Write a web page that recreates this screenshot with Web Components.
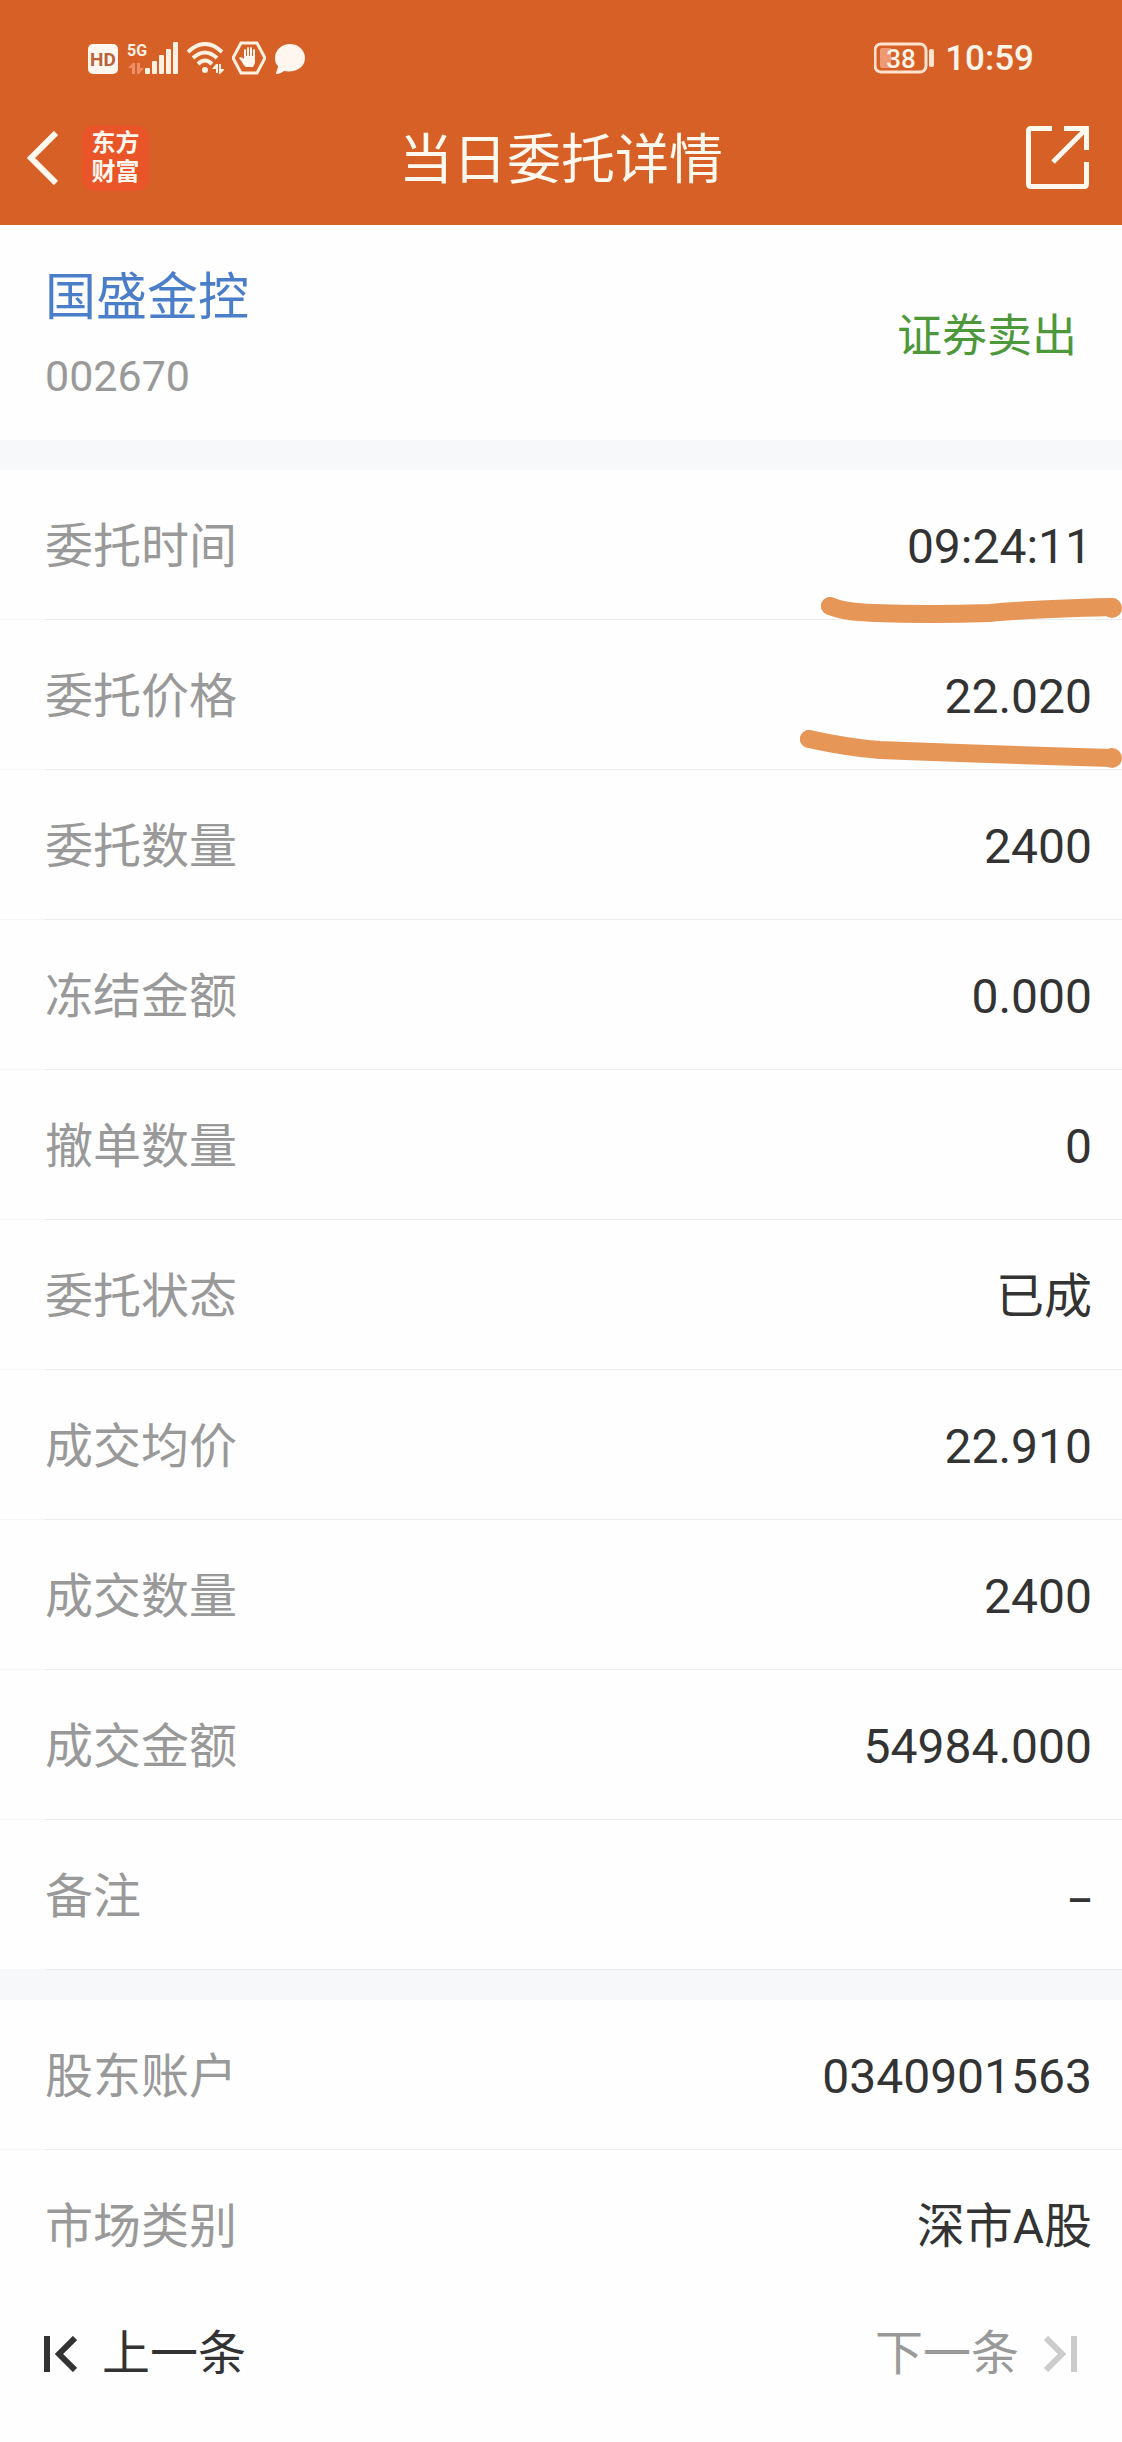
<!DOCTYPE html>
<html lang="zh-CN">
<head>
  <meta charset="UTF-8">
  <meta name="viewport" content="width=device-width, initial-scale=1">
  <title>当日委托详情</title>
  <style>
    body {
      margin: 0;
      background-color: #fefefe;
      color: #333333;
      font-family: Roboto, "Noto Sans CJK SC", sans-serif;
      font-size: 48px;
    }

    .empty {
      font-family: "Noto Sans", sans-serif;
      line-height: 48px;
    }
  </style>
</head>
<body>
  <order-page>
    <app-header slot="header">当日委托详情</app-header>
    <stock-summary name="国盛金控" code="002670">证券卖出</stock-summary>
    <detail-group>
      <detail-row label="委托时间">09:24:11<pen-mark slot="mark" kind="rise"></pen-mark></detail-row>
      <detail-row label="委托价格">22.020<pen-mark slot="mark" kind="fall"></pen-mark></detail-row>
      <detail-row label="委托数量">2400</detail-row>
      <detail-row label="冻结金额">0.000</detail-row>
      <detail-row label="撤单数量">0</detail-row>
      <detail-row label="委托状态">已成</detail-row>
      <detail-row label="成交均价">22.910</detail-row>
      <detail-row label="成交数量">2400</detail-row>
      <detail-row label="成交金额">54984.000</detail-row>
      <detail-row label="备注"><span class="empty">–</span></detail-row>
    </detail-group>
    <detail-group>
      <detail-row label="股东账户">0340901563</detail-row>
      <detail-row label="市场类别" last>深市A股</detail-row>
    </detail-group>
    <pager-bar slot="footer"></pager-bar>
  </order-page>

  <script>
    class OrderPage extends HTMLElement {
      constructor () {
        super()
        this.attachShadow({ mode: 'open' }).innerHTML = `
          <style>
            :host {
              display: flex;
              flex-direction: column;
            }
            main {
              display: flex;
              flex-direction: column;
              gap: 30px;
              background-color: #f6f8fa;
            }
          </style>
          <slot name="header"></slot>
          <main><slot></slot></main>
          <slot name="footer"></slot>
        `
      }
    }

    class StatusBar extends HTMLElement {
      constructor () {
        super()
        this.attachShadow({ mode: 'open' }).innerHTML = `
          <style>
            :host {
              display: flex;
              justify-content: space-between;
              align-items: center;
              padding: 24px 88px 0 88px;
              height: 68px;
              color: #fff4e8;
            }
            .icons, .info {
              display: flex;
              align-items: center;
            }
            .icons {
              gap: 8px;
            }
            .info {
              gap: 11px;
              font-size: 35px;
              font-weight: 500;
              line-height: 40px;
            }
            time {
              padding-top: 2px;
            }
            svg {
              display: block;
            }
          </style>
          <div class="icons">
            <svg width="31" height="32" viewBox="0 0 31 32">
              <rect y="2" width="30" height="30" rx="5" fill="#fff6f0"/>
              <text x="15" y="24" text-anchor="middle" font-size="19" font-weight="700" fill="#b9633a">HD</text>
            </svg>
            <svg width="52" height="40" viewBox="0 -4 52 40" fill="#fff1e2">
              <text x="0" y="14" font-size="16" font-weight="700">5G</text>
              <path d="M1 26l5-5h2v11H5v-6zM10 21h3v5h4l-5 6h-2z" fill="#ee8e68"/>
              <rect x="18" y="26" width="5" height="6" rx="1"/>
              <rect x="25" y="19" width="5" height="13" rx="1"/>
              <rect x="32" y="13" width="5" height="19" rx="1"/>
              <rect x="39" y="7" width="5" height="25" rx="1"/>
              <rect x="46" y="0" width="5" height="32" rx="1"/>
            </svg>
            <svg width="37" height="32" viewBox="0 0 37 32" fill="none" stroke="#fff1e2" stroke-width="4">
              <path d="M1 10q17-16 34 0M6 16q12-11 24 0M11 22q7-7 14 0"/>
              <circle cx="18" cy="28" r="3" fill="#fff1e2" stroke="none"/>
              <path d="M25 27l4-5h2v9h-2v-4zM32 22h2v5h4l-5 5h-1z" fill="#fff1e2" stroke="none"/>
            </svg>
            <svg width="34" height="34" viewBox="0 0 34 34" fill="#fff6f0">
              <path d="M9 2h16l8 15-8 15H9L1 17z" fill="none" stroke="#fff1e2" stroke-width="3"/>
              <path d="M12 18V9q1-2 2 0v6h1V7q1-2 2 0v8h1V7q1-2 2 0v8h1V9q1-2 2 0v13l-2 4h-7q-3-2-4-5l-3-4q2-2 5 1z"/>
            </svg>
            <svg width="32" height="32" viewBox="0 0 32 32" fill="#fff6f0">
              <path d="M16 2C8 2 1 8 1 16c0 4 1 6 3 8 0 3-2 5-2 8 4 0 6-2 8-3 12 2 21-4 21-13C31 8 24 2 16 2z"/>
            </svg>
          </div>
          <div class="info">
            <svg width="60" height="32" viewBox="0 0 60 32">
              <rect x="1" y="2" width="51" height="28" rx="6" fill="none" stroke="#ffe3cf" stroke-width="3"/>
              <path d="M8 6h9v20H8q-2 0-2-2V8q0-2 2-2z" fill="#ee9a74"/>
              <rect x="55" y="7" width="5" height="18" rx="2" fill="#ffe3cf"/>
              <text x="27" y="26" text-anchor="middle" font-size="26" font-weight="500" fill="#fff4e8">38</text>
            </svg>
            <time>10:59</time>
          </div>
        `
      }
    }

    class AppHeader extends HTMLElement {
      constructor () {
        super()
        this.attachShadow({ mode: 'open' }).innerHTML = `
          <style>
            :host {
              display: block;
              background-color: #d76027;
              color: #fff8ee;
            }
            nav {
              display: grid;
              grid-template-columns: 1fr auto 1fr;
              align-items: center;
              padding: 26px 27px 28px;
            }
            .left {
              display: flex;
              align-items: center;
              gap: 24px;
            }
            button {
              padding: 0;
              border: 0;
              background: none;
              color: inherit;
              cursor: pointer;
            }
            .share {
              justify-self: end;
              margin-right: 6px;
            }
            svg {
              display: block;
            }
            .logo {
              width: 67px;
              padding: 4px 0;
              border-radius: 13px;
              background-color: #e95428;
              font-size: 24px;
              font-weight: 700;
              line-height: 29px;
              text-align: center;
            }
            h1 {
              margin: 0;
              padding-top: 7px;
              font-size: 54px;
              font-weight: 400;
              line-height: 72px;
            }
          </style>
          <status-bar></status-bar>
          <nav>
            <div class="left">
              <button aria-label="返回">
                <svg width="31" height="54" viewBox="0 0 31 54" fill="none" stroke="currentColor" stroke-width="6">
                  <path d="M29 2L4 27l25 25"/>
                </svg>
              </button>
              <div class="logo">东方<br>财富</div>
            </div>
            <h1><slot></slot></h1>
            <button class="share" aria-label="分享">
              <svg width="63" height="63" viewBox="0 0 63 63" fill="none" stroke="currentColor" stroke-width="5">
                <path d="M26 2.500H5q-2.500 0-2.500 2.500v53q0 2.500 2.500 2.500h53q2.500 0 2.500-2.500V36M38 2.500h22.500V24M60 3L27 36"/>
              </svg>
            </button>
          </nav>
        `
      }
    }

    class StockSummary extends HTMLElement {
      constructor () {
        super()
        this.attachShadow({ mode: 'open' })
      }

      connectedCallback () {
        this.shadowRoot.innerHTML = `
          <style>
            :host {
              display: flex;
              justify-content: space-between;
              align-items: center;
              padding: 0 45px;
              background-color: #fefefe;
            }
            .stock {
              display: flex;
              flex-direction: column;
              gap: 8px;
              padding: 38px 0 29px;
              line-height: 70px;
            }
            .name {
              color: #4b7ec9;
              font-size: 51px;
              text-decoration: none;
            }
            .code {
              color: #999999;
              font-size: 43px;
            }
            .side {
              color: #4c983a;
              font-size: 45px;
            }
          </style>
          <div class="stock">
            <a class="name" href="#">${this.getAttribute('name')}</a>
            <span class="code">${this.getAttribute('code')}</span>
          </div>
          <span class="side"><slot></slot></span>
        `
      }
    }

    class DetailGroup extends HTMLElement {
      constructor () {
        super()
        this.attachShadow({ mode: 'open' }).innerHTML = `
          <style>
            :host {
              display: block;
              background-color: #fefefe;
            }
          </style>
          <slot></slot>
        `
      }
    }

    class DetailRow extends HTMLElement {
      constructor () {
        super()
        this.attachShadow({ mode: 'open' })
      }

      connectedCallback () {
        this.shadowRoot.innerHTML = `
          <style>
            :host {
              display: block;
              position: relative;
            }
            .row {
              display: flex;
              justify-content: space-between;
              align-items: center;
              padding: 41px 30px 36px 45px;
              line-height: 72px;
            }
            .label {
              color: #999999;
            }
            .line {
              height: 1px;
              background: linear-gradient(to right, #f7f7f7 45px, #ebebeb 45px);
            }
            :host([last]) .line {
              background: none;
            }
          </style>
          <div class="row">
            <span class="label">${this.getAttribute('label')}</span>
            <span class="value"><slot></slot></span>
          </div>
          <div class="line"></div>
          <slot name="mark"></slot>
        `
      }
    }

    // hand drawn underline that lies over the rows
    const STROKES = {
      rise: 'M30 15Q44 21 74 22Q130 24 190 22Q230 18 312 16',
      fall: 'M9 13Q50 22 80 24Q180 28 312 32'
    }

    class PenMark extends HTMLElement {
      constructor () {
        super()
        this.attachShadow({ mode: 'open' })
      }

      connectedCallback () {
        const kind = this.getAttribute('kind')
        const start = kind === 'rise' ? [30, 15] : [9, 13]
        const end = kind === 'rise' ? 17 : 32
        this.shadowRoot.innerHTML = `
          <style>
            :host {
              position: absolute;
              right: 0;
              z-index: 1;
              pointer-events: none;
            }
            :host([kind="rise"]) {
              bottom: -21px;
            }
            :host([kind="fall"]) {
              bottom: -6px;
            }
            svg {
              display: block;
            }
          </style>
          <svg width="322" height="50" viewBox="0 0 322 50" fill="#e69657">
            <path d="${STROKES[kind]}" fill="none" stroke="#e69657" stroke-width="18" stroke-linecap="round"/>
            <circle cx="${start[0]}" cy="${start[1]}" r="9"/>
            <circle cx="312" cy="${end}" r="10"/>
          </svg>
        `
      }
    }

    class PagerBar extends HTMLElement {
      constructor () {
        super()
        this.attachShadow({ mode: 'open' }).innerHTML = `
          <style>
            :host {
              display: flex;
              justify-content: space-between;
              padding: 18px 45px 52px 44px;
            }
            button {
              display: flex;
              align-items: center;
              gap: 25px;
              padding: 0;
              border: 0;
              background: none;
              color: inherit;
              font: inherit;
              line-height: 72px;
              cursor: pointer;
            }
            button:disabled {
              color: #999999;
              cursor: default;
            }
            svg {
              display: block;
            }
          </style>
          <button>
            <svg width="33" height="36" viewBox="0 0 33 36" fill="none" stroke="#333333" stroke-width="6">
              <path d="M3 0v36M31 2L15 18l16 16"/>
            </svg>
            上一条
          </button>
          <button disabled>
            下一条
            <svg width="33" height="36" viewBox="0 0 33 36" fill="none" stroke="#cccccc" stroke-width="6">
              <path d="M2 2l16 16L2 34M30 0v36"/>
            </svg>
          </button>
        `
      }
    }

    customElements.define('status-bar', StatusBar)
    customElements.define('app-header', AppHeader)
    customElements.define('stock-summary', StockSummary)
    customElements.define('pen-mark', PenMark)
    customElements.define('detail-row', DetailRow)
    customElements.define('detail-group', DetailGroup)
    customElements.define('pager-bar', PagerBar)
    customElements.define('order-page', OrderPage)
  </script>
</body>
</html>
